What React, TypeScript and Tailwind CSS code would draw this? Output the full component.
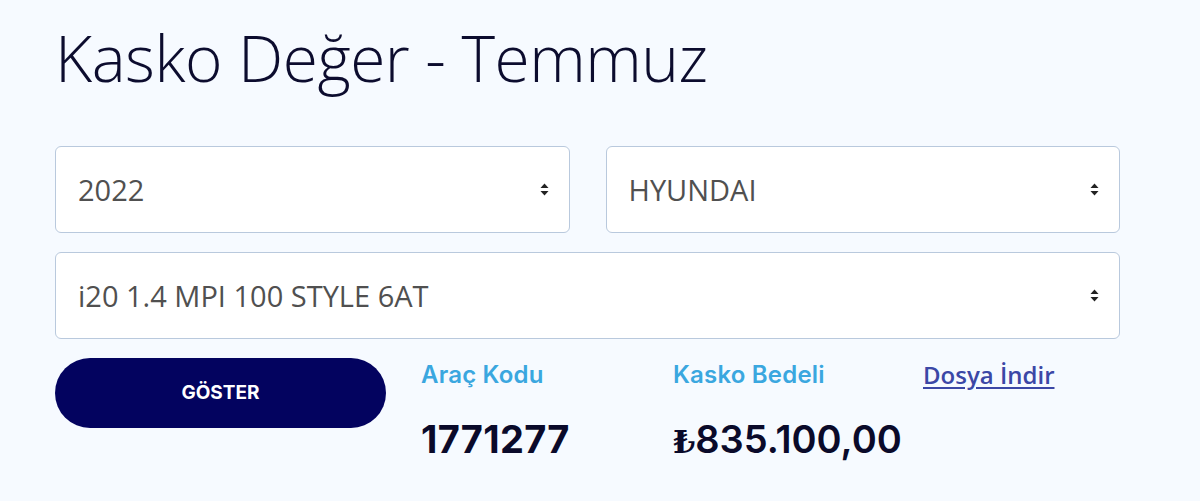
import { ReactNode } from "react";

function SortIcon() {
  return (
    <svg width="9" height="13" viewBox="0 0 9 13" className="shrink-0 text-[#222]">
      <path d="M4.5 0.5 L8.5 5 L0.5 5 Z" fill="currentColor" />
      <path d="M4.5 12.5 L8.5 8 L0.5 8 Z" fill="currentColor" />
    </svg>
  );
}

function FakeSelect({ children, className = "" }: { children: ReactNode; className?: string }) {
  return (
    <div
      className={`flex h-[87px] items-center justify-between rounded-[6px] border border-[#b9c9dd] bg-white pl-[22px] pr-[20px] ${className}`}
    >
      <span className="font-['Open_Sans',sans-serif] text-[29px] text-[#505050]">{children}</span>
      <SortIcon />
    </div>
  );
}

export default function App() {
  return (
    <div className="h-[501px] w-[1200px] overflow-hidden bg-[#f6faff] pl-[55px] pt-[18px]">
      <h1 className="font-['Open_Sans',sans-serif] text-[64px] font-light leading-[80px] tracking-[-0.5px] text-[#0c0c2e]">
        Kasko Değer - Temmuz
      </h1>

      <div className="mt-[48px] grid w-[1065px] grid-cols-2 gap-x-[36px] gap-y-[19px]">
        <FakeSelect>2022</FakeSelect>
        <FakeSelect>HYUNDAI</FakeSelect>
        <FakeSelect className="col-span-2">i20 1.4 MPI 100 STYLE 6AT</FakeSelect>
      </div>

      <div className="mt-[19px] flex items-start">
        <button
          type="button"
          className="h-[70px] w-[331px] rounded-full bg-[#03035f] font-['Inter',sans-serif] text-[19px] font-bold tracking-[0px] text-white"
        >
          GÖSTER
        </button>

        <div className="ml-[35px] w-[252px] pt-[2px] font-['Inter',sans-serif]">
          <p className="text-[24px] font-semibold leading-[30px] tracking-[0.2px] text-[#3aa7df]">Araç Kodu</p>
          <p className="mt-[27px] text-[38px] font-bold leading-[44px] tracking-[0.3px] text-[#0a0a2a]">1771277</p>
        </div>

        <div className="w-[250px] pt-[2px] font-['Inter',sans-serif]">
          <p className="text-[24px] font-semibold leading-[30px] tracking-[0.2px] text-[#3aa7df]">Kasko Bedeli</p>
          <p className="mt-[27px] text-[38px] font-semibold leading-[44px] text-[#0a0a2a]">
            <span className="font-['DejaVu_Serif',serif] text-[32px] font-bold">₺</span>835.100,00
          </p>
        </div>

        <a
          href="#"
          className="pt-[2px] font-['Open_Sans',sans-serif] text-[24px] font-semibold leading-[30px] text-[#3b47a6] underline underline-offset-[3px]"
        >
          Dosya İndir
        </a>
      </div>
    </div>
  );
}
